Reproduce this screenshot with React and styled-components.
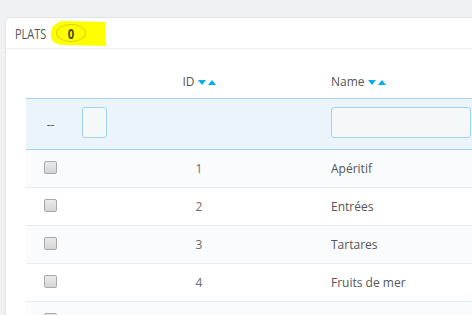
import styled, { createGlobalStyle } from "styled-components";

const GlobalStyle = createGlobalStyle`
  body {
    margin: 0;
    background: #eff1f2;
    font-family: "Open Sans", "Liberation Sans", sans-serif;
    font-size: 12px;
    color: #555;
    overflow: hidden;
  }
`;

const Page = styled.div`
  padding: 17px 0 0 5px;
  width: 760px;
`;

const Panel = styled.div`
  background: #fff;
  border: 1px solid #e4e4e4;
  border-radius: 5px;
  padding: 0 20px 20px;
  box-shadow: 0 2px 0 rgba(0, 0, 0, 0.05);
`;

const Heading = styled.div`
  position: relative;
  display: flex;
  align-items: center;
  height: 30px;
  margin: 0 -20px 15px;
  padding-left: 9px;
  border-bottom: 1px solid #eee;
`;

const Title = styled.span`
  display: inline-block;
  font-family: "Open Sans", "Liberation Sans", sans-serif;
  font-size: 14px;
  text-transform: uppercase;
  color: #555;
  position: relative;
  z-index: 1;
  transform: scaleX(0.78);
  transform-origin: left center;
  margin-right: -9px;
`;

const Highlight = styled.svg`
  position: absolute;
  left: 44px;
  top: 2px;
  width: 58px;
  height: 27px;
`;

const Badge = styled.span`
  position: relative;
  z-index: 1;
  display: inline-flex;
  align-items: center;
  justify-content: center;
  box-sizing: border-box;
  width: 30px;
  height: 18px;
  margin-left: 10px;
  border: 1px solid #d0d000;
  border-radius: 50%;
  font-family: "Open Sans", "Liberation Sans", sans-serif;
  font-weight: 700;
  font-size: 14px;
  color: #4a4a00;

  & > span {
    display: inline-block;
    transform: scaleX(0.8);
  }
`;

const Table = styled.table`
  border-collapse: collapse;
  table-layout: fixed;
  width: 660px;
`;

const HeadCell = styled.th`
  height: 34px;
  padding: 0 7px;
  font-weight: 400;
  font-size: 12px;
  color: #555;
  text-align: ${(p) => (p.$center ? "center" : "left")};
  white-space: nowrap;
`;

const SortArrows = styled.span`
  display: inline-flex;
  gap: 2px;
  margin-left: 3px;
  vertical-align: 1px;
`;

const FilterRow = styled.tr`
  background: #ebf4fa;
  border-top: 1px solid #a7d4ec;
  border-bottom: 1px solid #a7d4ec;
`;

const FilterCell = styled.td`
  height: 50px;
  padding: 0 7px;
  text-align: ${(p) => (p.$center ? "center" : "left")};
  vertical-align: middle;
`;

const FilterInput = styled.input`
  display: block;
  box-sizing: border-box;
  width: ${(p) => p.$width}px;
  height: 31px;
  margin-top: -3px;
  border: 1px solid #a3d2ec;
  border-radius: 3px;
  background: #f5f8f9;
  outline: none;
`;

const Row = styled.tr`
  background: ${(p) => (p.$odd ? "#f9fbfd" : "#fff")};
  border-bottom: 1px solid #eaedef;
`;

const Cell = styled.td`
  height: 37px;
  padding: 0 7px;
  font-size: 12px;
  color: ${(p) => (p.$muted ? "#6b6b6b" : "#555")};
  text-align: ${(p) => (p.$center ? "center" : "left")};
  vertical-align: middle;
`;

const Check = styled.span`
  display: inline-block;
  box-sizing: border-box;
  width: 13px;
  height: 13px;
  margin-top: -4px;
  vertical-align: middle;
  border: 1px solid #a9a9a9;
  border-radius: 2px;
  background: linear-gradient(#e9e9e9, #d6d6d6);
`;

function Arrow({ up }) {
  return (
    <svg width="8" height="5" viewBox="0 0 8 5">
      <path d={up ? "M0 5 L4 0 L8 5 Z" : "M0 0 L8 0 L4 5 Z"} fill="#00aff0" />
    </svg>
  );
}

const rows = [
  { id: 1, name: "Apéritif" },
  { id: 2, name: "Entrées" },
  { id: 3, name: "Tartares" },
  { id: 4, name: "Fruits de mer" },
  { id: 5, name: "" },
];

export default function App() {
  return (
    <>
      <GlobalStyle />
      <Page>
        <Panel>
          <Heading>
            <Highlight viewBox="0 0 58 27">
              <path
                d="M6 4 C2 5, 0 12, 1 17 C2 23, 8 25, 14 25 L56 26 L55 2 L14 1 C10 1, 8 2, 6 4 Z"
                fill="#ffff00"
              />
            </Highlight>
            <Title>Plats</Title>
            <Badge>
              <span>0</span>
            </Badge>
          </Heading>
          <Table>
            <colgroup>
              <col style={{ width: 49 }} />
              <col style={{ width: 65 }} />
              <col style={{ width: 118 }} />
              <col style={{ width: 66 }} />
              <col />
            </colgroup>
            <thead>
              <tr>
                <HeadCell />
                <HeadCell />
                <HeadCell $center>
                  ID
                  <SortArrows>
                    <Arrow />
                    <Arrow up />
                  </SortArrows>
                </HeadCell>
                <HeadCell />
                <HeadCell>
                  Name
                  <SortArrows>
                    <Arrow />
                    <Arrow up />
                  </SortArrows>
                </HeadCell>
              </tr>
              <FilterRow>
                <FilterCell $center>--</FilterCell>
                <FilterCell>
                  <FilterInput $width={25} />
                </FilterCell>
                <FilterCell />
                <FilterCell />
                <FilterCell>
                  <FilterInput $width={140} />
                </FilterCell>
              </FilterRow>
            </thead>
            <tbody>
              {rows.map((r, i) => (
                <Row key={r.id} $odd={i % 2 === 0}>
                  <Cell $center>
                    <Check />
                  </Cell>
                  <Cell />
                  <Cell $center $muted>
                    {r.name ? r.id : ""}
                  </Cell>
                  <Cell />
                  <Cell>{r.name}</Cell>
                </Row>
              ))}
            </tbody>
          </Table>
        </Panel>
      </Page>
    </>
  );
}
